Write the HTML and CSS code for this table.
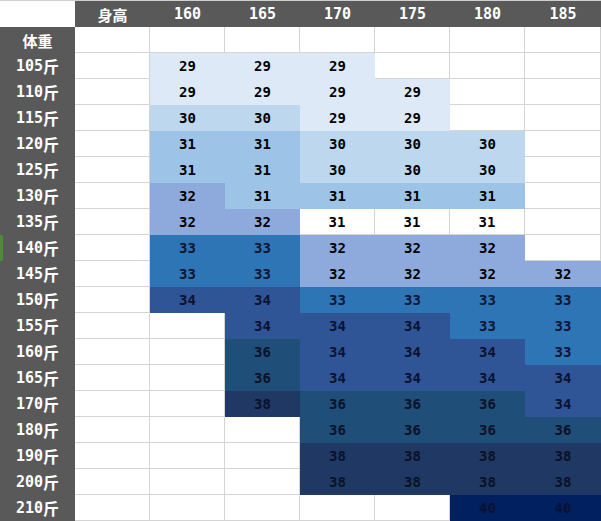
FILE: index.html
```html
<!DOCTYPE html>
<html lang="zh">
<head>
<meta charset="utf-8">
<title>尺码表</title>
<link rel="stylesheet" href="styles.css">
</head>
<body>
<div class="chart">
  <div class="corner"></div>
  <div class="hd cjk">身高</div><div class="hd">160</div><div class="hd">165</div><div class="hd">170</div><div class="hd">175</div><div class="hd">180</div><div class="hd">185</div>

  <div class="rh cjk">体重</div><div class="c"></div><div class="c"></div><div class="c"></div><div class="c"></div><div class="c"></div><div class="c"></div><div class="c"></div>

  <div class="rh">105<span class="cjk">斤</span></div><div class="c"></div><div class="c v29">29</div><div class="c v29">29</div><div class="c v29">29</div><div class="c"></div><div class="c"></div><div class="c"></div>

  <div class="rh">110<span class="cjk">斤</span></div><div class="c"></div><div class="c v29">29</div><div class="c v29">29</div><div class="c v29">29</div><div class="c v29">29</div><div class="c"></div><div class="c"></div>

  <div class="rh">115<span class="cjk">斤</span></div><div class="c"></div><div class="c v30">30</div><div class="c v30">30</div><div class="c v29">29</div><div class="c v29">29</div><div class="c"></div><div class="c"></div>

  <div class="rh">120<span class="cjk">斤</span></div><div class="c"></div><div class="c v31">31</div><div class="c v31">31</div><div class="c v30">30</div><div class="c v30">30</div><div class="c v30">30</div><div class="c"></div>

  <div class="rh">125<span class="cjk">斤</span></div><div class="c"></div><div class="c v31">31</div><div class="c v31">31</div><div class="c v30">30</div><div class="c v30">30</div><div class="c v30">30</div><div class="c"></div>

  <div class="rh">130<span class="cjk">斤</span></div><div class="c"></div><div class="c v32">32</div><div class="c v31">31</div><div class="c v31">31</div><div class="c v31">31</div><div class="c v31">31</div><div class="c"></div>

  <div class="rh">135<span class="cjk">斤</span></div><div class="c"></div><div class="c v32">32</div><div class="c v32">32</div><div class="c">31</div><div class="c">31</div><div class="c">31</div><div class="c"></div>

  <div class="rh mark">140<span class="cjk">斤</span></div><div class="c"></div><div class="c v33">33</div><div class="c v33">33</div><div class="c v32">32</div><div class="c v32">32</div><div class="c v32">32</div><div class="c"></div>

  <div class="rh">145<span class="cjk">斤</span></div><div class="c"></div><div class="c v33">33</div><div class="c v33">33</div><div class="c v32">32</div><div class="c v32">32</div><div class="c v32">32</div><div class="c v32">32</div>

  <div class="rh">150<span class="cjk">斤</span></div><div class="c"></div><div class="c v34">34</div><div class="c v34">34</div><div class="c v33">33</div><div class="c v33">33</div><div class="c v33">33</div><div class="c v33">33</div>

  <div class="rh">155<span class="cjk">斤</span></div><div class="c"></div><div class="c"></div><div class="c v34">34</div><div class="c v34">34</div><div class="c v34">34</div><div class="c v33">33</div><div class="c v33">33</div>

  <div class="rh">160<span class="cjk">斤</span></div><div class="c"></div><div class="c"></div><div class="c v36">36</div><div class="c v34">34</div><div class="c v34">34</div><div class="c v34">34</div><div class="c v33">33</div>

  <div class="rh">165<span class="cjk">斤</span></div><div class="c"></div><div class="c"></div><div class="c v36">36</div><div class="c v34">34</div><div class="c v34">34</div><div class="c v34">34</div><div class="c v34">34</div>

  <div class="rh">170<span class="cjk">斤</span></div><div class="c"></div><div class="c"></div><div class="c v38">38</div><div class="c v36">36</div><div class="c v36">36</div><div class="c v36">36</div><div class="c v34">34</div>

  <div class="rh">180<span class="cjk">斤</span></div><div class="c"></div><div class="c"></div><div class="c"></div><div class="c v36">36</div><div class="c v36">36</div><div class="c v36">36</div><div class="c v36">36</div>

  <div class="rh">190<span class="cjk">斤</span></div><div class="c"></div><div class="c"></div><div class="c"></div><div class="c v38">38</div><div class="c v38">38</div><div class="c v38">38</div><div class="c v38">38</div>

  <div class="rh">200<span class="cjk">斤</span></div><div class="c"></div><div class="c"></div><div class="c"></div><div class="c v38">38</div><div class="c v38">38</div><div class="c v38">38</div><div class="c v38">38</div>

  <div class="rh">210<span class="cjk">斤</span></div><div class="c"></div><div class="c"></div><div class="c"></div><div class="c"></div><div class="c"></div><div class="c v40">40</div><div class="c v40">40</div>
</div>
</body>
</html>
```

FILE: styles.css
```css
html, body {
  margin: 0;
  padding: 0;
  background: #ffffff;
}

.chart {
  display: grid;
  grid-template-columns: repeat(7, 75px) 76px;
  grid-template-rows: repeat(20, 26px);
  width: 601px;
  border-top: 1px solid #cfcfcf;
  font-family: "DejaVu Sans Mono", "Liberation Mono", monospace;
  font-weight: bold;
  font-size: 14px;
}

.chart > div {
  box-sizing: border-box;
  display: flex;
  align-items: center;
  justify-content: center;
  line-height: 1;
}

.cjk {
  font-family: "Noto Sans CJK SC", sans-serif;
  font-weight: bold;
}

.corner {
  background: #ffffff;
}

.hd {
  background: #595959;
  color: #ffffff;
  font-size: 15px;
}

.hd.cjk {
  font-size: 15px;
}

.rh {
  background: #595959;
  color: #ffffff;
  font-size: 15px;
}

.rh .cjk {
  font-size: 16px;
}

.rh.mark {
  box-shadow: inset 3px 0 0 #4f8a3a;
}

.c {
  background: #ffffff;
  color: #000000;
  border-right: 1px solid #d4d4d4;
  border-bottom: 1px solid #d4d4d4;
}

.c.v29,
.c.v30,
.c.v31,
.c.v32,
.c.v33,
.c.v34,
.c.v36,
.c.v38,
.c.v40 {
  border: none;
}

.v29 { background: #dde9f6; }
.v30 { background: #bdd7ee; }
.v31 { background: #9dc3e6; }
.v32 { background: #8eaadc; }
.v33 { background: #2e75b6; color: #0d1533; }
.v34 { background: #2f5597; color: #0a1230; }
.v36 { background: #1f4e79; color: #0a1228; }
.v38 { background: #203864; color: #0a1228; }
.v40 { background: #002060; color: #0a1232; }
```
